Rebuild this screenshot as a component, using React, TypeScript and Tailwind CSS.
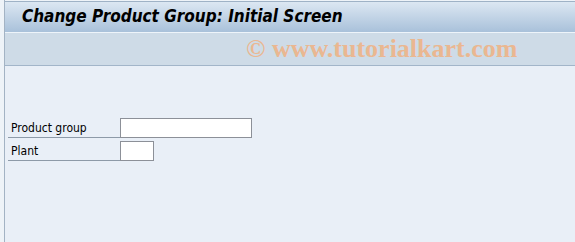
export default function App() {
  return (
    <div className="flex h-[242px] w-[575px] overflow-hidden bg-[#e9eff7] font-['DejaVu_Sans_Condensed','DejaVu_Sans',sans-serif]">
      {/* left strip */}
      <div className="w-[4px] shrink-0 bg-[#eef3f8]" />
      <div className="flex min-w-0 flex-1 flex-col border-l border-[#a3b3c4]">
        <div className="h-[2px] border-b border-[#9fb2c6] bg-[#eef3f8]" />
        {/* title bar */}
        <div className="flex h-[31px] items-center border-b border-[#eef4fa] bg-gradient-to-b from-[#dce7f2] to-[#a9c1da] pl-[17px]">
          <h1 className="text-[17px] font-bold italic text-black">
            Change Product Group: Initial Screen
          </h1>
        </div>
        {/* toolbar */}
        <div className="flex h-[33px] items-center border-b border-[#a2b5c9] bg-[#cedbe7] pl-[241px]">
          <span className="font-['Liberation_Serif',serif] text-[26px] font-bold leading-none text-[#eab791]">
            © www.tutorialkart.com
          </span>
        </div>
        {/* body */}
        <div className="flex flex-col gap-[3px] pl-[3px] pt-[52px] text-[12px] text-black">
          <div className="flex items-end">
            <div className="w-[112px] border-b border-[#8d9aa8] pl-[3px] leading-[18px]">
              Product group
            </div>
            <div className="h-[20px] w-[132px] border border-[#8c9098] bg-white" />
          </div>
          <div className="flex items-end">
            <div className="w-[112px] border-b border-[#8d9aa8] pl-[3px] leading-[18px]">Plant</div>
            <div className="h-[20px] w-[34px] border border-[#8c9098] bg-white" />
          </div>
        </div>
      </div>
    </div>
  );
}
